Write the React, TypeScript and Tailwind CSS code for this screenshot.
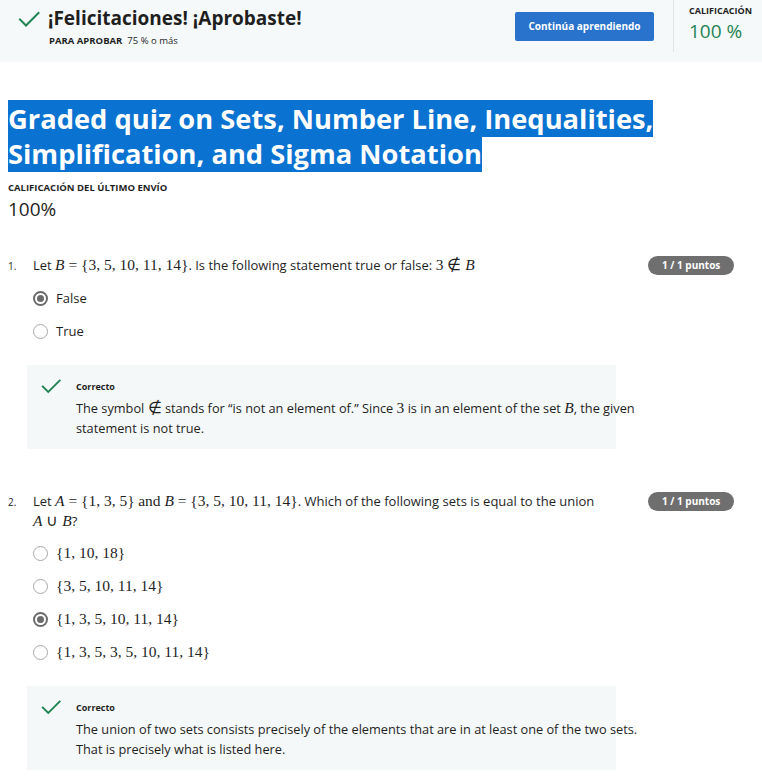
import React from 'react';

const sans = { fontFamily: '"Open Sans", "Noto Sans", sans-serif' };

// small math span, serif like the KaTeX output
const M: React.FC<{ children: React.ReactNode }> = ({ children }) => (
  <span className="font-['Liberation_Serif','Times_New_Roman',serif] text-[15.5px] leading-[18px] text-[#1f1f1f] whitespace-nowrap">{children}</span>
);

const I: React.FC<{ children: React.ReactNode }> = ({ children }) => <i>{children}</i>;

const Check: React.FC<{ size?: number }> = ({ size = 22 }) => (
  <svg width={size} height={size} viewBox="0 0 24 24" fill="none">
    <path d="M3 12.5l6 6L21.5 6" stroke="#1f8354" strokeWidth="2" strokeLinecap="square" />
  </svg>
);

const Radio: React.FC<{ checked?: boolean }> = ({ checked }) =>
  checked ? (
    <span className="w-[15px] h-[15px] rounded-full border-2 border-[#6b6b6b] flex items-center justify-center shrink-0">
      <span className="w-[7px] h-[7px] rounded-full bg-[#6b6b6b]" />
    </span>
  ) : (
    <span className="w-[15px] h-[15px] rounded-full border border-[#a9a9a9] shrink-0" />
  );

const Option: React.FC<{ checked?: boolean; children: React.ReactNode }> = ({ checked, children }) => (
  <div className="flex items-center gap-[8px] h-[33px]">
    <Radio checked={checked} />
    <span className="text-[13px] text-[#1f1f1f]">{children}</span>
  </div>
);

const Badge = () => (
  <span className="flex whitespace-nowrap h-[19px] px-[14px] rounded-full bg-[#6f6f6f] text-white text-[10px] font-bold items-center">
    1 / 1 puntos
  </span>
);

const Feedback: React.FC<{ children: React.ReactNode }> = ({ children }) => (
  <div className="ml-[27px] w-[589px] bg-[#f5f8f8] pt-[13px] pb-[11px] pl-[13px] flex gap-[14px]">
    <div className="-mt-[3px]"><Check size={22} /></div>
    <div className="w-[575px] shrink-0">
      <div className="text-[9px] font-bold text-[#1f1f1f] leading-[18px]">Correcto</div>
      <div className="mt-[2px] text-[12.75px] leading-[20px] text-[#1f1f1f]">{children}</div>
    </div>
  </div>
);

const Question: React.FC<{ n: string; text: React.ReactNode; children: React.ReactNode }> = ({ n, text, children }) => (
  <div className="px-2">
    <div className="flex">
      <span className="w-[25px] shrink-0 text-[10px] leading-[20px] pt-[1px]">{n}</span>
      <div className="flex-1 min-w-0 text-[13px] leading-[20px]">{text}</div>
      <div className="w-[139px] shrink-0 pl-[33px] pt-[1px] flex items-start"><Badge /></div>
    </div>
    <div className="ml-[25px] mt-[6px]">{children}</div>
  </div>
);

export default function App() {
  return (
    <div className="w-[762px] min-h-[782px] bg-white text-[#1f1f1f] overflow-hidden" style={sans}>
      <div className="h-[62px] bg-[#f5f9f9] flex">
        <div className="flex pl-[17px] pt-[5px] gap-[7px]">
          <div className="pt-[2px]"><Check size={24} /></div>
          <div>
            <div className="text-[19px] font-bold leading-[26px]">¡Felicitaciones! ¡Aprobaste!</div>
            <div className="text-[9.5px] leading-[14px] mt-[3px] ml-[1px]">
              <span className="font-bold">PARA APROBAR</span>&nbsp; 75 % o más
            </div>
          </div>
        </div>
        <div className="ml-auto pt-[12px]">
          <button className="w-[139px] h-[29px] bg-[#2a73cc] rounded-[2px] text-white text-[10px] font-bold">
            Continúa aprendiendo
          </button>
        </div>
        <div className="w-px h-[52px] bg-[#e2e6e6] ml-[19px]" />
        <div className="pl-[15px] pr-[5px] pt-[4px] w-[88px]">
          <div className="text-[9px] font-bold leading-[14px]">CALIFICACIÓN</div>
          <div className="text-[19px] text-[#1f8354] leading-[26px]">100 %</div>
        </div>
      </div>

      <h1 className="mt-[39px] px-2 text-[27.3px] font-bold leading-[35px] text-white">
        <span className="bg-[#0a72d1]">Graded quiz on Sets, Number Line, Inequalities, Simplification, and Sigma Notation</span>
      </h1>

      <div className="px-2 mt-[10px]">
        <div className="text-[9.5px] font-bold leading-[14px]">CALIFICACIÓN DEL ÚLTIMO ENVÍO</div>
        <div className="text-[19px] leading-[26px] mt-[1px]">100%</div>
      </div>

      <div className="mt-[33px]">
        <Question
          n="1."
          text={<>Let <M><I>B</I> = {'{'}3, 5, 10, 11, 14{'}'}</M>. Is the following statement true or false: <M>3 ∉ <I>B</I></M></>}
        >
          <Option checked>False</Option>
          <Option>True</Option>
        </Question>
      </div>

      <div className="mt-[17px]">
        <Feedback>
          The symbol <M>∉</M> stands for “is not an element of.” Since <M>3</M> is in an element of the set <M><I>B</I></M>, the given statement is not true.
        </Feedback>
      </div>

      <div className="mt-[42px]">
        <Question
          n="2."
          text={<>Let <M><I>A</I> = {'{'}1, 3, 5{'}'}</M> <M>and <I>B</I> = {'{'}3, 5, 10, 11, 14{'}'}</M>. Which of the following sets is equal to the union <M><I>A</I> ∪ <I>B</I></M>?</>}
        >
          <Option><M>{'{'}1, 10, 18{'}'}</M></Option>
          <Option><M>{'{'}3, 5, 10, 11, 14{'}'}</M></Option>
          <Option checked><M>{'{'}1, 3, 5, 10, 11, 14{'}'}</M></Option>
          <Option><M>{'{'}1, 3, 5, 3, 5, 10, 11, 14{'}'}</M></Option>
        </Question>
      </div>

      <div className="mt-[17px]">
        <Feedback>
          The union of two sets consists precisely of the elements that are in at least one of the two sets. That is precisely what is listed here.
        </Feedback>
      </div>
    </div>
  );
}
